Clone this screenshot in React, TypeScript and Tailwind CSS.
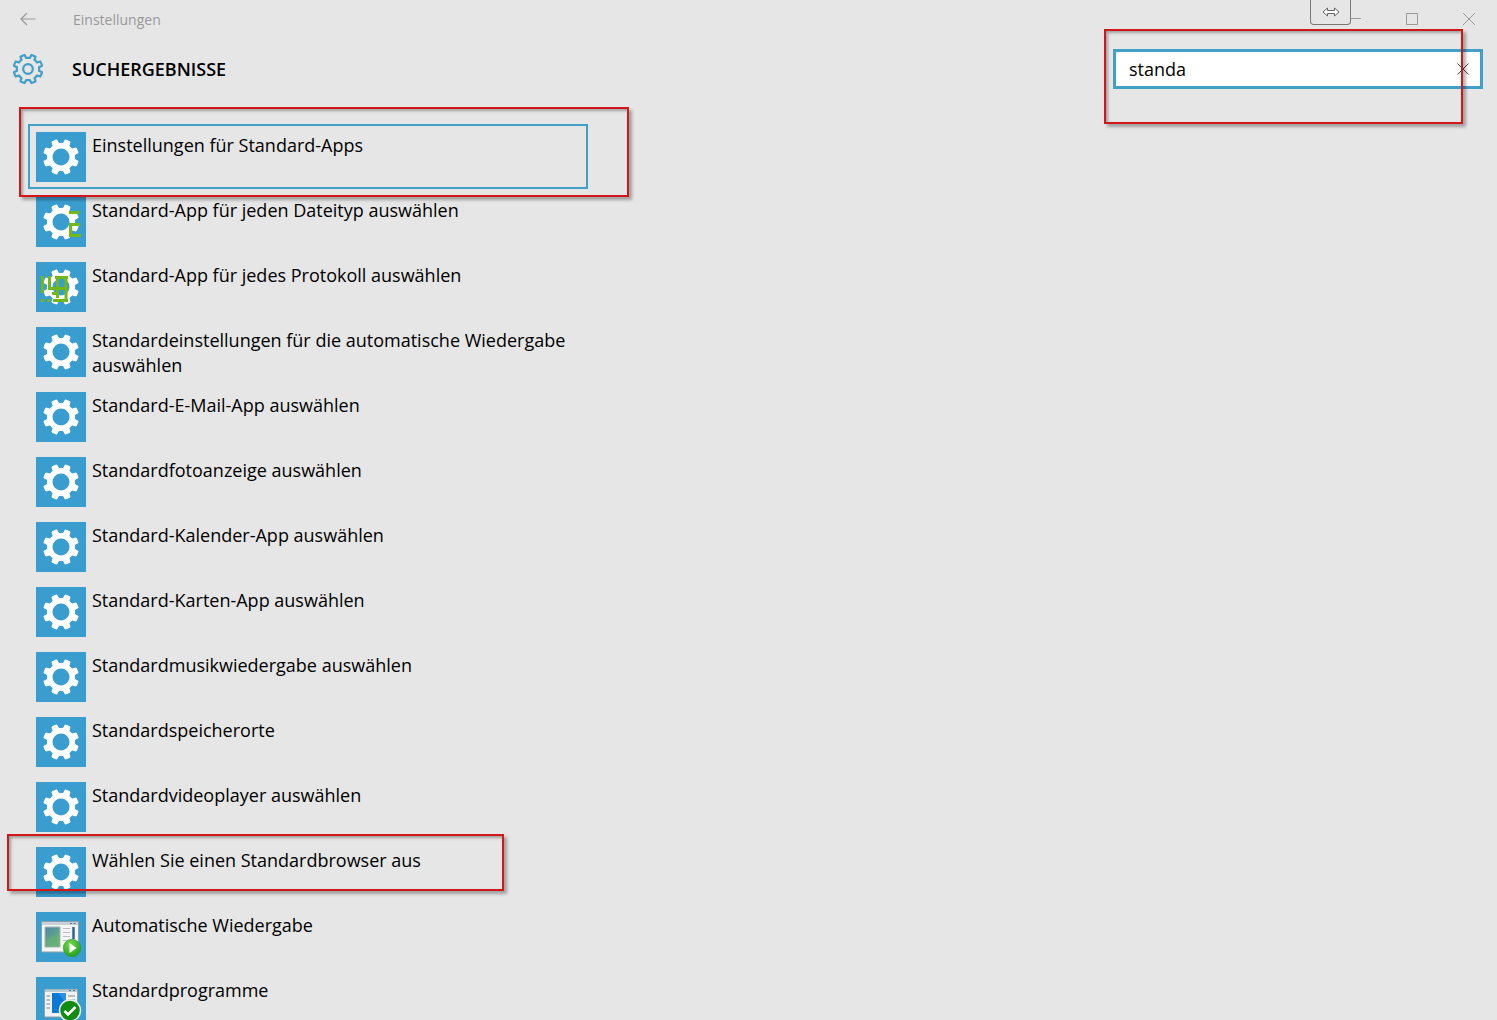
import { useState } from "react";
import type { ReactNode } from "react";

function polar(radius: number, degrees: number): string {
  const a = (degrees * Math.PI) / 180;
  return `${(25 + radius * Math.sin(a)).toFixed(2)} ${(25 - radius * Math.cos(a)).toFixed(2)}`;
}

/** Outline of an eight-toothed gear in a 50 x 50 box. */
function gearPath(outer: number, root: number, tip: number, base: number): string {
  let d = "";
  for (let i = 0; i < 8; i++) {
    const a = 22.5 + i * 45;
    d += `${i === 0 ? "M" : `A${root} ${root} 0 0 1 `}${polar(root, a - base)}`;
    d += `L${polar(outer, a - tip)}A${outer} ${outer} 0 0 1 ${polar(outer, a + tip)}L${polar(root, a + base)}`;
  }
  return `${d}A${root} ${root} 0 0 1 ${polar(root, 22.5 - base)}Z`;
}

const SOLID_GEAR = gearPath(17.6, 13.6, 8.5, 13);
const LINE_GEAR = gearPath(22.5, 17.5, 9, 13);

function Tile({ children }: { children: ReactNode }) {
  return (
    <svg viewBox="0 0 50 50" className="size-[50px] shrink-0 bg-[#3a9dcf]" aria-hidden="true">
      {children}
    </svg>
  );
}

function Gear() {
  return (
    <>
      <path d={SOLID_GEAR} fill="#fff" stroke="#fff" strokeLinejoin="round" />
      <circle cx="25" cy="25" r="8.5" fill="#3a9dcf" />
    </>
  );
}

function GearIcon() {
  return (
    <Tile>
      <Gear />
    </Tile>
  );
}

function FileTypeIcon() {
  return (
    <Tile>
      <Gear />
      <path d="M33 15.500H43.500M44 27.500H34.500V38.500H45" fill="none" stroke="#73b817" strokeWidth="3" />
    </Tile>
  );
}

function ProtocolIcon() {
  return (
    <Tile>
      <Gear />
      <g fill="none" stroke="#73b817" strokeWidth="3">
        <path d="M6.500 14V31M5 38.500H8" />
        <path d="M11 38.500H14M17 38.500H32" />
        <path d="M13.500 14V26.500H32M19 15.500H32M21.500 14V36M30 14V40" />
        <path d="M16 31.500H23" />
      </g>
    </Tile>
  );
}

function AutoplayIcon() {
  return (
    <Tile>
      <defs>
        <linearGradient id="photo" x1="0" y1="0" x2="0.6" y2="1">
          <stop offset="0" stopColor="#4d86a8" />
          <stop offset="0.55" stopColor="#5fa08f" />
          <stop offset="1" stopColor="#7cc07a" />
        </linearGradient>
        <radialGradient id="play" cx="0.4" cy="0.3" r="0.8">
          <stop offset="0" stopColor="#77d94b" />
          <stop offset="1" stopColor="#189a16" />
        </radialGradient>
      </defs>
      <path d="M5.500 9.500H42.500V40H5.500Z" fill="#f5f5f4" stroke="#8da0aa" />
      <path d="M6 10H42V13H6Z" fill="#c8d2d6" />
      <path d="M34 11.500H36M37.500 11.500H39.500" stroke="#52707f" />
      <path d="M9 15H24V35H9Z" fill="url(#photo)" stroke="#a9b5b5" />
      <path d="M10 29Q17 23 23.500 23V34.500H10Z" fill="#65ad78" opacity="0.8" />
      <path d="M27 16.500H34M27 20.500H34M27 24.500H34M27 28.500H32" stroke="#b9bec6" />
      <path d="M37.500 15V27" stroke="#30658e" strokeWidth="2.500" />
      <circle cx="36" cy="36" r="8.700" fill="url(#play)" stroke="#2b9b2a" strokeWidth="0.600" />
      <path d="M33.500 31L40.500 36L33.500 41Z" fill="#fff" />
    </Tile>
  );
}

function ProgramsIcon() {
  return (
    <Tile>
      <path d="M8.500 12.500H41.500V40H8.500Z" fill="#f2f2f2" stroke="#8da0aa" />
      <path d="M9 12.500H41V15H9Z" fill="#b9cbd5" />
      <path d="M33 13.500H35M37 13.500H39" stroke="#52707f" />
      <path d="M16 16H30V36H16Z" fill="#0c7ad5" />
      <path d="M22 16H30V26Z" fill="#2b91e4" />
      <path d="M10.500 19H14M10.500 23H14M10.500 27H14M10.500 31H14M32 19H39M32 23H39" stroke="#7d858b" />
      <circle cx="34" cy="33.500" r="10.500" fill="#128a14" stroke="#e9f3e9" strokeWidth="1.500" />
      <path d="M28.500 34L32 37.500L39.500 30" fill="none" stroke="#fff" strokeWidth="2.500" />
    </Tile>
  );
}

const MARK = "pointer-events-none absolute z-10 border-2 border-[#d01818] [box-shadow:3px_3px_3px_rgba(0,0,0,0.3),inset_2px_2px_3px_rgba(0,0,0,0.3)]";

type Result = { label: string; icon?: ReactNode; selected?: boolean; mark?: ReactNode };

const RESULTS: Result[] = [
  {
    label: "Einstellungen für Standard-Apps",
    selected: true,
    mark: <span className={`${MARK} -top-[19px] -left-[11px] h-[90px] w-[610px]`} />,
  },
  { label: "Standard-App für jeden Dateityp auswählen", icon: <FileTypeIcon /> },
  { label: "Standard-App für jedes Protokoll auswählen", icon: <ProtocolIcon /> },
  { label: "Standardeinstellungen für die automatische Wiedergabe auswählen" },
  { label: "Standard-E-Mail-App auswählen" },
  { label: "Standardfotoanzeige auswählen" },
  { label: "Standard-Kalender-App auswählen" },
  { label: "Standard-Karten-App auswählen" },
  { label: "Standardmusikwiedergabe auswählen" },
  { label: "Standardspeicherorte" },
  { label: "Standardvideoplayer auswählen" },
  {
    label: "Wählen Sie einen Standardbrowser aus",
    mark: <span className={`${MARK} -top-[7px] -left-[23px] h-[57px] w-[497px]`} />,
  },
  { label: "Automatische Wiedergabe", icon: <AutoplayIcon /> },
  { label: "Standardprogramme", icon: <ProgramsIcon /> },
];

function TitleBar() {
  return (
    <div className="flex h-[38px] items-center pr-[21px] pl-5 text-[#999]">
      <button type="button" aria-label="Zurück" className="w-[53px]">
        <svg viewBox="0 0 16 14" className="h-[14px] w-4" fill="none" stroke="currentColor" aria-hidden="true">
          <path d="M7 1L1 7L7 13M1 7H15.500" strokeWidth="1.200" />
        </svg>
      </button>
      <span className="pt-0.5 text-sm">Einstellungen</span>
      <div className="ml-auto flex items-center">
        <button
          type="button"
          aria-label="Fenster verschieben"
          className="flex h-[25px] w-[41px] items-center justify-center self-start rounded-b border border-t-0 border-[#777] text-[#555]"
        >
          <svg viewBox="0 0 18 10" className="h-[10px] w-[18px]" fill="#fff" stroke="currentColor" aria-hidden="true">
            <path d="M1 5L5.500 1V3.500H12.500V1L17 5L12.500 9V6.500H5.500V9Z" strokeWidth="0.900" />
          </svg>
        </button>
        <button type="button" aria-label="Minimieren" className="h-[38px] w-[11px]">
          <svg viewBox="0 0 11 12" className="h-3 w-[11px]" stroke="currentColor" aria-hidden="true">
            <path d="M0 5.500H10" />
          </svg>
        </button>
        <button type="button" aria-label="Maximieren" className="ml-11">
          <svg viewBox="0 0 12 12" className="size-3" fill="none" stroke="currentColor" aria-hidden="true">
            <path d="M0.500 0.500H11.500V11.500H0.500Z" />
          </svg>
        </button>
        <button type="button" aria-label="Schließen" className="ml-11">
          <svg viewBox="0 0 14 14" className="size-[14px]" stroke="currentColor" aria-hidden="true">
            <path d="M1 1L13 13M13 1L1 13" />
          </svg>
        </button>
      </div>
    </div>
  );
}

function Header() {
  const [query, setQuery] = useState("standa");
  return (
    <header className="flex items-center pt-[11px] pr-[14px] pl-3">
      <svg viewBox="0 0 50 50" className="mr-7 size-8" fill="none" stroke="#429fc8" strokeWidth="3.500" aria-hidden="true">
        <path d={LINE_GEAR} strokeLinejoin="round" />
        <circle cx="25" cy="25" r="7.500" />
      </svg>
      <h1 className="text-lg font-semibold">SUCHERGEBNISSE</h1>
      <div className="relative ml-auto flex h-10 w-[370px] items-center border-3 border-[#429fc8] bg-white pr-[11px]">
        <input
          type="text"
          aria-label="Einstellung suchen"
          value={query}
          onChange={(e) => setQuery(e.target.value)}
          className="min-w-0 flex-1 pl-[13px] text-lg outline-none"
        />
        <button type="button" aria-label="Suche löschen" onClick={() => setQuery("")}>
          <svg viewBox="0 0 12 12" className="size-3" stroke="#444" aria-hidden="true">
            <path d="M0.500 0.500L11.500 11.500M11.500 0.500L0.500 11.500" />
          </svg>
        </button>
        <span className={`${MARK} -top-[23px] -left-3 h-[95px] w-[359px]`} />
      </div>
    </header>
  );
}

export default function App() {
  return (
    <div className="h-screen overflow-hidden bg-[#e6e6e6] font-['Open_Sans','Noto_Sans',sans-serif] text-black">
      <TitleBar />
      <Header />
      <main className="pt-[35px] pl-7">
        <ul className="max-w-[560px]">
          {RESULTS.map(({ label, icon, selected, mark }) => (
            <li key={label}>
              <button
                type="button"
                className={`relative flex h-[65px] w-full items-start gap-[6px] border-2 p-[6px] text-left text-lg leading-[25px] ${
                  selected ? "border-[#429fc8]" : "border-transparent"
                }`}
              >
                {icon ?? <GearIcon />}
                <span className="pt-px">{label}</span>
                {mark}
              </button>
            </li>
          ))}
        </ul>
      </main>
    </div>
  );
}
